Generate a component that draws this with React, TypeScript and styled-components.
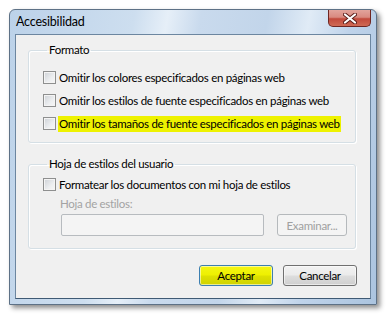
import styled, { createGlobalStyle } from 'styled-components';

const GlobalStyle = createGlobalStyle`
  html, body {
    margin: 0;
    padding: 0;
    background: #ffffff;
  }
  body {
    font-family: Lato, "Noto Sans", sans-serif;
    font-size: 11.5px;
    letter-spacing: -0.3px;
    color: #000;
  }
`;

const Page = styled.div`
  width: 386px;
  height: 317px;
  padding: 9px 0 0 9px;
  box-sizing: border-box;
`;

const Window = styled.div`
  width: 368px;
  box-sizing: border-box;
  border: 1px solid #5d7186;
  border-radius: 6px 6px 0 0;
  background: linear-gradient(100deg, #bcd2e9 0%, #cddeef 30%, #e6eff8 38%, #c9daed 46%, #c2d5ea 62%, #e0ebf6 72%, #bfd3ea 82%, #abc4df 100%);
  box-shadow: 3px 3px 5px rgba(0, 0, 0, 0.45);
  padding: 0 5px 5px 5px;
`;

const TitleBar = styled.div`
  height: 24px;
  display: flex;
  justify-content: space-between;
  align-items: flex-start;
`;

const Title = styled.span`
  padding: 4px 0 0 1px;
  line-height: 16px;
  font-size: 12.5px;
  letter-spacing: -0.2px;
  color: #000;
`;

const CloseButton = styled.div`
  width: 43px;
  height: 17px;
  box-sizing: border-box;
  border: 1px solid #6e2622;
  border-top: none;
  border-radius: 0 0 5px 5px;
  background: linear-gradient(#e2a49c 0%, #d98a80 45%, #c24a3c 55%, #cf6a55 100%);
  display: flex;
  align-items: center;
  justify-content: center;
`;

const Client = styled.div`
  border: 1px solid #6c86a0;
  border-bottom-color: #3f5a74;
  background: #f0f0f0;
  padding: 7px 12px 12px 12px;
`;

const Group = styled.fieldset<{ $gap?: number; $top?: number; $bottom?: number }>`
  margin: ${(p) => p.$gap ?? 0}px 0 0 0;
  padding: ${(p) => p.$top ?? 8}px 0 ${(p) => p.$bottom ?? 7}px 14px;
  border: 1px solid #d5dfe5;
  border-radius: 3px;
  box-shadow: inset 1px 1px 0 #ffffff, 1px 1px 0 #ffffff;
  min-inline-size: 0;
  width: 328px;
  box-sizing: border-box;
`;

const GroupTitle = styled.legend`
  margin-left: 4px;
  padding: 0 2px;
  line-height: 16px;
`;

const CheckRow = styled.div`
  height: 23px;
  display: flex;
  align-items: center;
`;

const Box = styled.span`
  width: 13px;
  height: 13px;
  box-sizing: border-box;
  border: 1px solid #8e8f8f;
  background: linear-gradient(135deg, #cdd1d6 0%, #eceef0 60%, #f7f7f7 100%);
  box-shadow: inset 0 0 0 1px #f4f4f4;
  margin-right: 2px;
  flex: none;
`;

const Label = styled.span<{ $marked?: boolean }>`
  line-height: 16px;
  padding: 0 1px;
  background: ${(p) => (p.$marked ? '#eef200' : 'transparent')};
  white-space: nowrap;
`;

const DimLabel = styled.div`
  color: #a3a3a3;
  line-height: 15px;
  padding-left: 17px;
`;

const FileRow = styled.div`
  display: flex;
  gap: 13px;
  margin: 3px 0 0 18px;
`;

const FileInput = styled.div`
  width: 203px;
  height: 22px;
  box-sizing: border-box;
  border: 1px solid #b7bbbf;
  border-radius: 2px;
  background: #f4f4f4;
`;

const Button = styled.div<{ $tone?: 'default' | 'plain' | 'off' }>`
  height: ${(p) => (p.$tone === 'off' ? 22 : 21)}px;
  width: ${(p) => (p.$tone === 'off' ? 70 : 74)}px;
  box-sizing: border-box;
  border-radius: 3px;
  display: flex;
  align-items: center;
  justify-content: center;
  border: 1px solid
    ${(p) => (p.$tone === 'default' ? '#3c7fb1' : p.$tone === 'off' ? '#b5b9bc' : '#707070')};
  color: ${(p) => (p.$tone === 'off' ? '#a0a0a0' : '#000')};
  background: ${(p) =>
    p.$tone === 'default'
      ? 'linear-gradient(#f4f615 0%, #eef000 48%, #dfe100 52%, #cfd200 100%)'
      : p.$tone === 'off'
      ? '#f4f4f4'
      : 'linear-gradient(#f2f2f2 0%, #ebebeb 48%, #dddddd 52%, #cfcfcf 100%)'};
  box-shadow: ${(p) => (p.$tone === 'off' ? 'none' : 'inset 0 0 0 1px rgba(255,255,255,0.55)')};
`;

const Footer = styled.div`
  display: flex;
  justify-content: flex-end;
  gap: 10px;
  margin-top: 16px;
  padding-right: 1px;
`;

function App() {
  return (
    <Page>
      <GlobalStyle />
      <Window>
        <TitleBar>
          <Title>Accesibilidad</Title>
          <CloseButton>
            <svg width="14" height="11" viewBox="0 0 14 11">
              <path d="M2 1.5 L12 9.5 M12 1.5 L2 9.5" stroke="#5a1c18" strokeWidth="4" strokeLinecap="round" />
              <path d="M2 1.5 L12 9.5 M12 1.5 L2 9.5" stroke="#ffffff" strokeWidth="2.2" strokeLinecap="round" />
            </svg>
          </CloseButton>
        </TitleBar>
        <Client>
          <Group>
            <GroupTitle>Formato</GroupTitle>
            <CheckRow>
              <Box />
              <Label>Omitir los colores especificados en páginas web</Label>
            </CheckRow>
            <CheckRow>
              <Box />
              <Label>Omitir los estilos de fuente especificados en páginas web</Label>
            </CheckRow>
            <CheckRow>
              <Box />
              <Label $marked>Omitir los tamaños de fuente especificados en páginas web</Label>
            </CheckRow>
          </Group>
          <Group $gap={13} $top={1} $bottom={12}>
            <GroupTitle>Hoja de estilos del usuario</GroupTitle>
            <CheckRow>
              <Box />
              <Label>Formatear los documentos con mi hoja de estilos</Label>
            </CheckRow>
            <DimLabel>Hoja de estilos:</DimLabel>
            <FileRow>
              <FileInput />
              <Button $tone="off">Examinar...</Button>
            </FileRow>
          </Group>
          <Footer>
            <Button $tone="default">Aceptar</Button>
            <Button $tone="plain">Cancelar</Button>
          </Footer>
        </Client>
      </Window>
    </Page>
  );
}

export default App;
